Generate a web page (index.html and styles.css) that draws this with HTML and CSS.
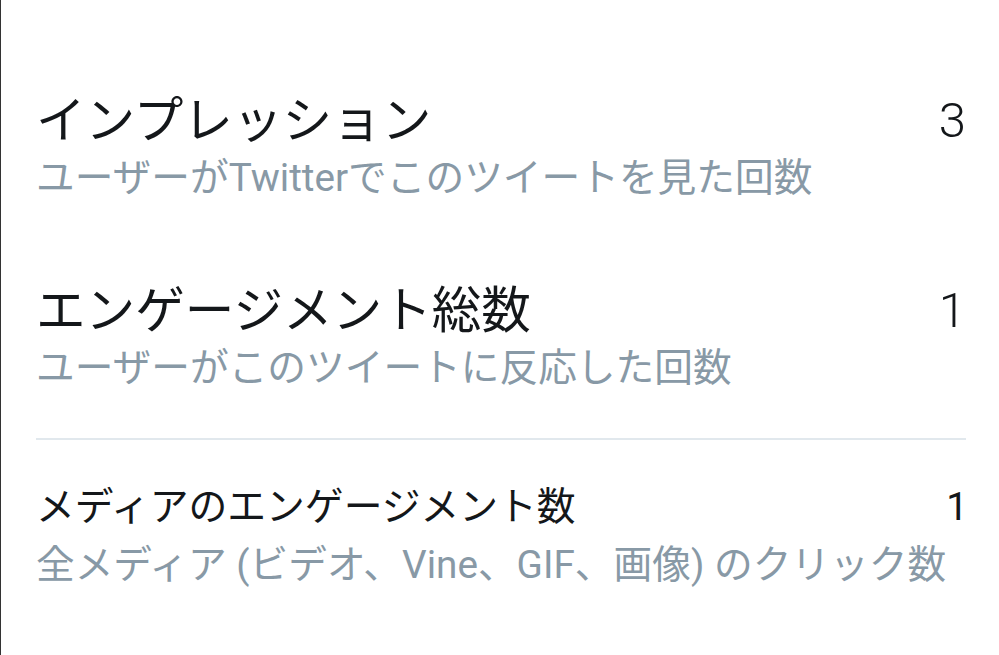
FILE: index.html
```html
<!DOCTYPE html>
<html lang="ja">
<head>
    <meta charset="UTF-8">
    <meta name="viewport" content="width=device-width, initial-scale=1.0">
    <title>ツイートアクティビティ</title>
    <link rel="stylesheet" href="styles.css">
</head>
<body>
    <div class="panel">
        <!-- 主な指標 -->
        <div class="metric">
            <div class="metric-text">
                <div class="metric-title">インプレッション</div>
                <div class="metric-desc">ユーザーがTwitterでこのツイートを見た回数</div>
            </div>
            <div class="metric-value">3</div>
        </div>

        <div class="metric">
            <div class="metric-text">
                <div class="metric-title">エンゲージメント総数</div>
                <div class="metric-desc">ユーザーがこのツイートに反応した回数</div>
            </div>
            <div class="metric-value">1</div>
        </div>

        <hr class="divider">

        <!-- 詳細 -->
        <div class="metric small">
            <div class="metric-text">
                <div class="metric-title">メディアのエンゲージメント数</div>
                <div class="metric-desc">全メディア (ビデオ、Vine、GIF、画像) のクリック数</div>
            </div>
            <div class="metric-value">1</div>
        </div>
    </div>
</body>
</html>
```

FILE: styles.css
```css
body {
    margin: 0;
    height: 655px;
    overflow: hidden;
    background-color: #ffffff;
    font-family: Roboto, "Noto Sans CJK JP", sans-serif;
    color: #14171a;
}

.panel {
    height: 100%;
    box-sizing: border-box;
    border-left: 1px solid #333;
    padding: 92px 33px 0 35px;
}

.metric {
    display: flex;
    justify-content: space-between;
    align-items: flex-start;
    margin-bottom: 76px;
}

.metric-text {
    white-space: nowrap;
}

.metric-title {
    font-size: 49.6px;
    line-height: 58px;
}

.metric-desc {
    font-size: 38.7px;
    line-height: 56px;
    color: #8899a6;
}

.metric-value {
    font-size: 49px;
    line-height: 58px;
    font-weight: 300;
}

.divider {
    border: none;
    border-top: 2px solid #e1e8ed;
    margin: -34px 0 38px 0;
}

.metric.small .metric-title {
    font-size: 38.8px;
    line-height: 58px;
}

.metric.small .metric-desc {
    line-height: 58px;
}

.metric.small .metric-value {
    font-size: 38.5px;
    line-height: 58px;
    font-weight: 400;
}
```
